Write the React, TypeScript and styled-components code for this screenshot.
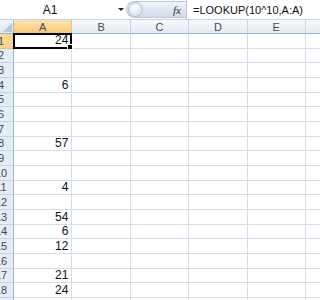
import styled, { createGlobalStyle } from 'styled-components'

const GlobalStyle = createGlobalStyle`
  html, body {
    margin: 0;
    padding: 0;
    background: #ffffff;
    overflow: hidden;
  }
  body {
    font-family: 'Liberation Sans', Arial, sans-serif;
  }
`

const COL_W = 58.4
const ROW_H = 14.67
const HEAD_W = 26

const columns = ['A', 'B', 'C', 'D', 'E', 'F']

const values: Record<number, number> = {
  1: 24,
  4: 6,
  8: 57,
  11: 4,
  13: 54,
  14: 6,
  15: 12,
  17: 21,
  18: 24,
}

const Window = styled.div`
  width: 320px;
  height: 300px;
  overflow: hidden;
  display: flex;
  flex-direction: column;
  background: #ffffff;
`

const FormulaBar = styled.div`
  height: 19px;
  flex: 0 0 auto;
  display: flex;
  align-items: center;
  background: #ffffff;
  border-bottom: 1px solid #c5d2e3;
`

const NameBox = styled.div`
  width: 130px;
  margin-left: -4px;
  height: 100%;
  display: flex;
  align-items: center;
  font-size: 12px;
  color: #111;
`

const NameText = styled.span`
  width: 108px;
  text-align: center;
`

const DropArrow = styled.span`
  width: 0;
  height: 0;
  margin-left: 14px;
  border-left: 3px solid transparent;
  border-right: 3px solid transparent;
  border-top: 3px solid #222;
`

const Pill = styled.div`
  width: 60px;
  height: 17px;
  box-sizing: border-box;
  border-radius: 9px 0 0 9px;
  background: linear-gradient(#f3f6fa, #dde5ef 55%, #d1dbe8);
  border: 1px solid #b9c7d8;
  border-right: none;
  display: flex;
  align-items: center;
  justify-content: space-between;
  padding-left: 1px;
`

const Knob = styled.span`
  width: 13px;
  height: 13px;
  border-radius: 50%;
  background: radial-gradient(circle at 40% 35%, #ffffff, #dbe3ec 70%, #b4c1d1);
  border: 1px solid #aebdcf;
`

const Fx = styled.span`
  font-family: 'Liberation Serif', 'Times New Roman', serif;
  font-style: italic;
  font-size: 11px;
  color: #333;
  margin-right: 5px;
`

const FormulaInput = styled.div`
  flex: 1;
  height: 100%;
  box-sizing: border-box;
  border-left: 1px solid #b9c7d8;
  padding-left: 6px;
  display: flex;
  align-items: center;
  font-size: 11px;
  color: #111;
  white-space: nowrap;
  overflow: hidden;
`

const Grid = styled.div`
  display: grid;
  margin-left: -12px;
  grid-template-columns: ${HEAD_W}px repeat(${columns.length}, ${COL_W}px);
  grid-auto-rows: ${ROW_H}px;
  grid-template-rows: 14px;
`

const Corner = styled.div`
  background: linear-gradient(#f1f4f8, #dfe6ef);
  border-right: 1px solid #9eb6ce;
  border-bottom: 1px solid #9eb6ce;
  box-sizing: border-box;
  position: relative;
  &::after {
    content: '';
    position: absolute;
    right: 1px;
    bottom: 1px;
    border-left: 9px solid transparent;
    border-bottom: 9px solid #b6c6d8;
  }
`

const ColHeader = styled.div<{ $active: boolean }>`
  box-sizing: border-box;
  border-right: 1px solid ${(p) => (p.$active ? '#f2c06d' : '#c5d2e3')};
  border-bottom: 1px solid ${(p) => (p.$active ? '#f2b544' : '#9eb6ce')};
  background: ${(p) =>
    p.$active
      ? 'linear-gradient(#fbe4b6, #f9d493 55%, #f6c877)'
      : 'linear-gradient(#f7f9fb, #eef2f6 55%, #e3e9f0)'};
  font-size: 11px;
  color: #3d4a5c;
  display: flex;
  align-items: center;
  justify-content: center;
`

const RowHeader = styled.div<{ $active: boolean }>`
  box-sizing: border-box;
  border-right: 1px solid ${(p) => (p.$active ? '#f2b544' : '#9eb6ce')};
  border-bottom: 1px solid ${(p) => (p.$active ? '#f2c06d' : '#c5d2e3')};
  background: ${(p) => (p.$active ? '#f9d595' : '#e4ecf7')};
  font-size: 11px;
  color: #3d4a5c;
  display: flex;
  align-items: center;
  justify-content: center;
  padding-left: 1px;
`

const Cell = styled.div`
  box-sizing: border-box;
  border-right: 1px solid #d4dce7;
  border-bottom: 1px solid #d4dce7;
  font-size: 12px;
  color: #111;
  display: flex;
  align-items: flex-end;
  justify-content: flex-end;
  padding-right: 3px;
  line-height: 13px;
`

const ActiveCell = styled(Cell)`
  position: relative;
  border: 2px solid #000;
  margin: -1px 0 0 -1px;
  padding-right: 2px;
  &::after {
    content: '';
    position: absolute;
    right: -3px;
    bottom: -3px;
    width: 4px;
    height: 4px;
    background: #000;
    border: 1px solid #fff;
  }
`

export default function App() {
  const rows = Array.from({ length: 19 }, (_, i) => i + 1)
  return (
    <Window>
      <GlobalStyle />
      <FormulaBar>
        <NameBox>
          <NameText>A1</NameText>
          <DropArrow />
        </NameBox>
        <Pill>
          <Knob />
          <Fx>fx</Fx>
        </Pill>
        <FormulaInput>=LOOKUP(10^10,A:A)</FormulaInput>
      </FormulaBar>
      <Grid>
        <Corner />
        {columns.map((c) => (
          <ColHeader key={c} $active={c === 'A'}>
            {c}
          </ColHeader>
        ))}
        {rows.map((r) => [
          <RowHeader key={`h${r}`} $active={r === 1}>
            {r}
          </RowHeader>,
          ...columns.map((c) =>
            c === 'A' && r === 1 ? (
              <ActiveCell key={`${c}${r}`}>{values[r]}</ActiveCell>
            ) : (
              <Cell key={`${c}${r}`}>{c === 'A' ? values[r] : ''}</Cell>
            )
          ),
        ])}
      </Grid>
    </Window>
  )
}
